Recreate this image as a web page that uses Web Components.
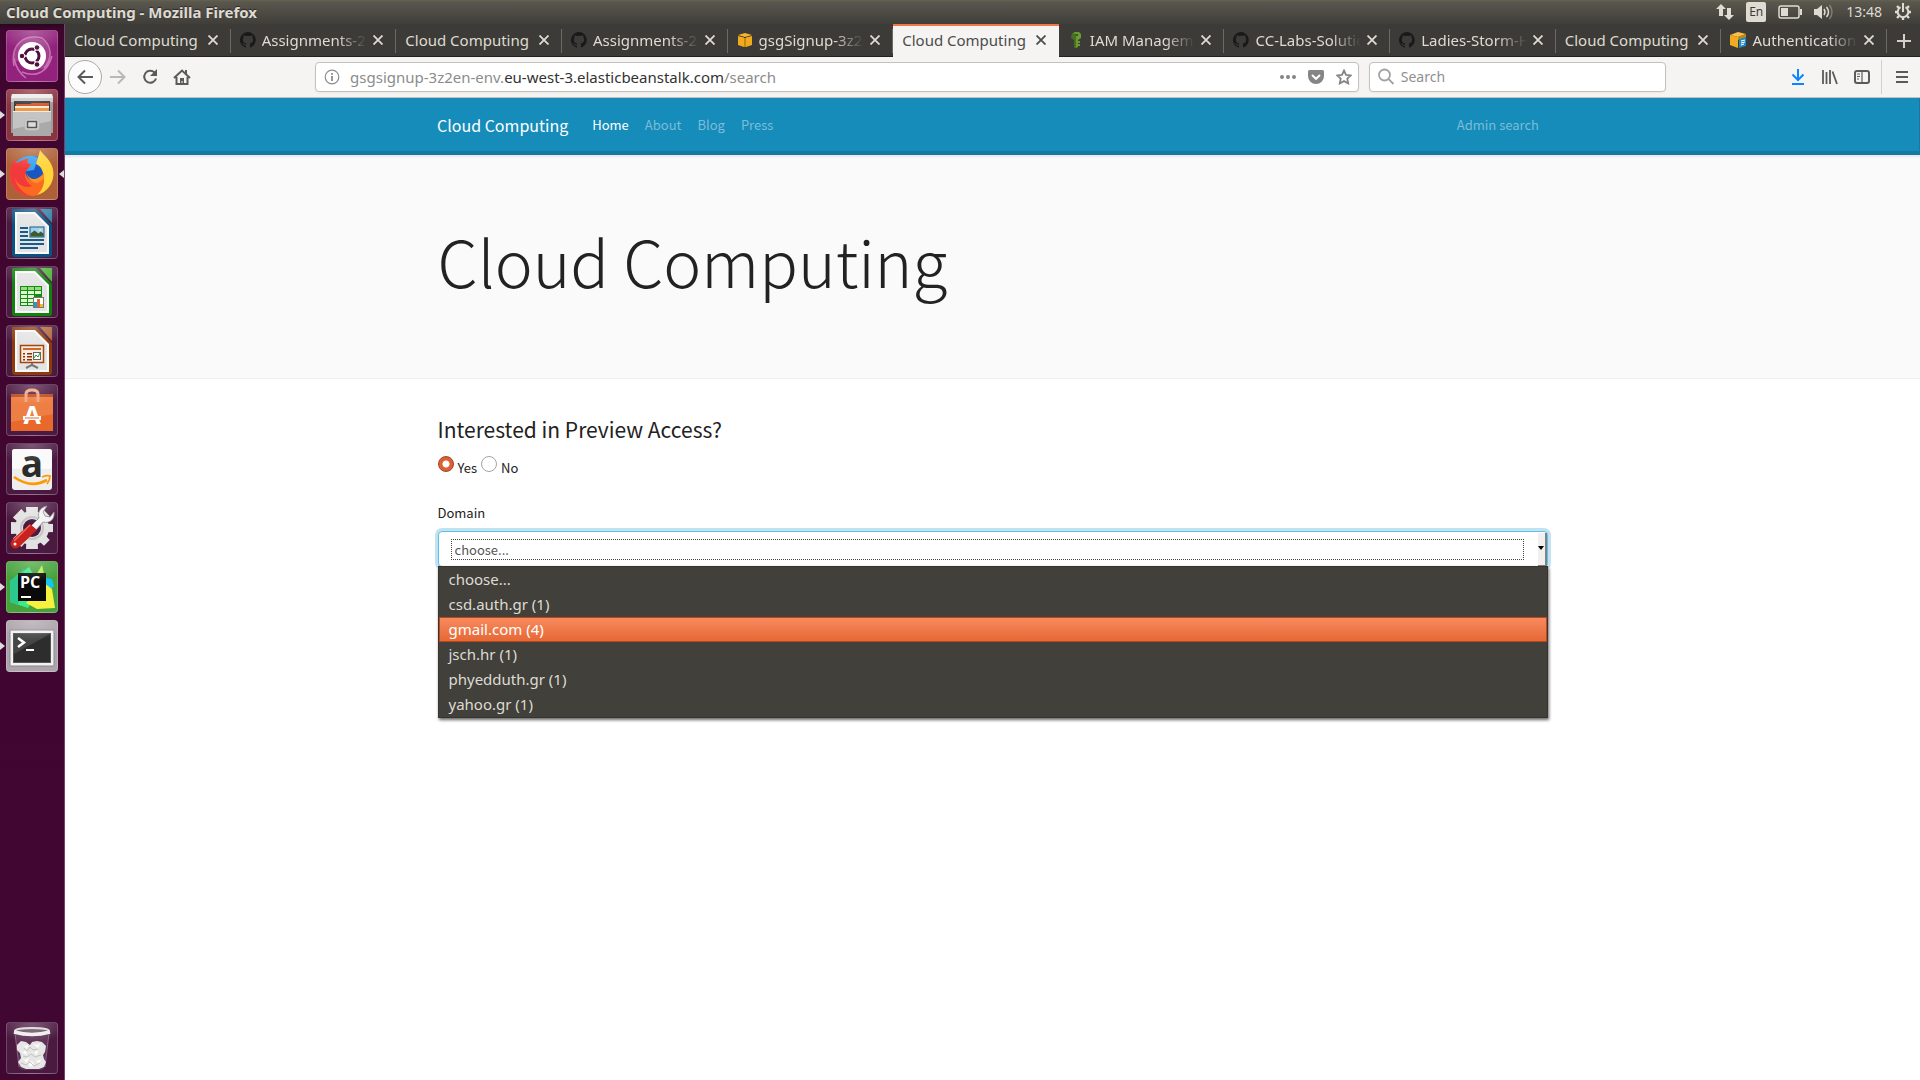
<!DOCTYPE html>
<html lang="en">
<head>
<meta charset="utf-8">
<title>Cloud Computing - Mozilla Firefox</title>
<style>
  html, body { margin: 0; height: 100%; background: #fff; }
  body {
    --ui: "Noto Sans", "Open Sans", sans-serif;
    --site: "Noto Sans CJK SC", "Open Sans", sans-serif;
    font-family: var(--ui);
    font-size: 14px;
    display: flex;
    flex-direction: column;
    min-height: 100vh;
  }
  .desk { flex: 1; display: flex; }
  .window { flex: 1; min-width: 0; display: flex; flex-direction: column; }
</style>
</head>
<body>
<top-panel>Cloud Computing - Mozilla Firefox</top-panel>
<div class="desk">
  <app-launcher></app-launcher>
  <div class="window">
    <tab-strip>
      <browser-tab>Cloud Computing</browser-tab>
      <browser-tab icon="github">Assignments-2018</browser-tab>
      <browser-tab>Cloud Computing</browser-tab>
      <browser-tab icon="github">Assignments-2018</browser-tab>
      <browser-tab icon="cube">gsgSignup-3z2en</browser-tab>
      <browser-tab active>Cloud Computing</browser-tab>
      <browser-tab icon="key">IAM Management</browser-tab>
      <browser-tab icon="github">CC-Labs-Solutions</browser-tab>
      <browser-tab icon="github">Ladies-Storm-Hack</browser-tab>
      <browser-tab>Cloud Computing</browser-tab>
      <browser-tab icon="cubedoc">Authentication a</browser-tab>
    </tab-strip>
    <nav-toolbar></nav-toolbar>
    <site-nav></site-nav>
    <hero-banner>Cloud Computing</hero-banner>
    <preview-form></preview-form>
  </div>
</div>

<script>
const define = (name, html, setup) => {
  const tpl = document.createElement('template');
  tpl.innerHTML = html;
  customElements.define(name, class extends HTMLElement {
    constructor() {
      super();
      this.attachShadow({ mode: 'open' }).append(tpl.content.cloneNode(true));
    }
    connectedCallback() { if (setup) setup(this, this.shadowRoot); }
  });
};

define('top-panel', `
<style>
  :host { display: flex; align-items: center; justify-content: space-between; height: 24px; padding: 0 8px 0 6px;
    box-sizing: border-box; background: linear-gradient(#66614f 0, #5a574e 2px, #3f3e39 100%); color: #dfdbd2; }
  .title { font-weight: 700; font-size: 15px; line-height: 24px; text-shadow: 0 -1px 1px #2a2925; }
  .tray { display: flex; align-items: center; gap: 12px; font-size: 14px; line-height: 24px; }
  .lang { background: #dfdbd2; color: #3c3b37; width: 20px; height: 20px; line-height: 20px; border-radius: 2px; text-align: center; font-size: 12px; }
  svg { display: block; }
</style>
<div class="title"><slot></slot></div>
<div class="tray">
  <svg width="18" height="18" viewBox="0 0 18 18" fill="#dfdbd2"><path d="M5 1l5 5H7v7H3V6H0zM13 17l5-5h-3V5h-4v7H8z"/></svg>
  <span class="lang">En</span>
  <svg width="24" height="14" viewBox="0 0 24 14"><rect x="1" y="1" width="20" height="12" rx="2" fill="none" stroke="#dfdbd2" stroke-width="1.5"/><rect x="3" y="3" width="7" height="8" fill="#dfdbd2"/><rect x="22" y="4" width="2" height="6" fill="#dfdbd2"/></svg>
  <svg width="20" height="16" viewBox="0 0 20 16"><path d="M0 5h3l5-4v14l-5-4H0z" fill="#dfdbd2"/><g fill="none" stroke="#dfdbd2" stroke-width="1.5"><path d="M10 5q2 3 0 6M12.500 3q4 5 0 10"/><path d="M15.500 1q5 7 0 14" opacity=".35"/></g></svg>
  <span>13:48</span>
  <svg width="18" height="18" viewBox="0 0 18 18"><g fill="none" stroke="#dfdbd2"><path d="M6.500 4.200a5.300 5.300 0 1 0 5 0" stroke-width="2"/><path d="M9 0v9" stroke-width="2"/><path d="M3 3l2 2M15 3l-2 2M1 9h3M17 9h-3M3 15l2-2M15 15l-2-2M9 17v-3" stroke-width="2.400"/></g></svg>
</div>`);

define('launcher-item', `
<style>
  :host { display: block; position: relative; width: 52px; height: 52px; margin-left: 6px; border-radius: 4px;
    background: var(--tile, #4b1a41); }
  button { all: unset; display: block; width: 52px; height: 52px; border-radius: 4px; position: relative; }
  button::after { content: ""; position: absolute; inset: 0; border-radius: 4px; pointer-events: none;
    border: 1px solid #ffffff30; background: radial-gradient(ellipse 36px 20px at 50% 0, #ffffff48, #ffffff00); }
  svg { display: block; overflow: visible; }
  i { display: none; position: absolute; top: 22px; border: 4px solid transparent; }
  .run { left: -6px; border-left: 5px solid #ddd; border-right: 0; }
  .focus { right: -6px; border-right: 5px solid #ddd; border-left: 0; }
  :host([running]) .run, :host([focused]) .focus { display: block; }
</style>
<button><svg width="52" height="52" viewBox="0 0 52 52"></svg></button><i class="run"></i><i class="focus"></i>`,
(host, root) => {
  root.querySelector('svg').innerHTML = APPS[host.getAttribute('app')];
  root.querySelector('button').setAttribute('aria-label', host.getAttribute('app'));
});

const page = (dark, light, inner) => `
  <path d="M6 2h24l16 16v29a3 3 0 0 1-3 3H9a3 3 0 0 1-3-3z" fill="${dark}"/>
  <path d="M34 2h12v14z" fill="${light}"/>
  <path d="M9 5h20l14 14v28H9z" fill="#fafafa"/><path d="M11 7h17l13 13v25H11z" fill="#e4e4e4"/>${inner}`;

const APPS = {
  dash: `<g fill="none" stroke="#d78bc6" stroke-width="1.500" opacity=".75"><path d="M8 36C4 14 18 4 36 8M36 8c10 8 11 20 2 30M16 42c14 6 26 0 30-16M8 28c2 10 6 16 12 20"/></g>
    <path d="M8 30C6 12 22 2 40 12c8 12 4 22-2 28z" fill="#c777b4" opacity=".35"/>
    <circle cx="26" cy="26" r="14" fill="#fff"/><circle cx="26" cy="26" r="7" fill="none" stroke="#53103f" stroke-width="3"/>
    <g stroke="#fff" stroke-width="1.500"><path d="M26 26h-9M26 26l5-9M26 26l5 9"/></g><circle cx="26" cy="26" r="5" fill="#fff"/>
    <g fill="#53103f" stroke="#fff" stroke-width="1"><circle cx="16" cy="26" r="2.800"/><circle cx="31" cy="17.500" r="2.800"/><circle cx="31" cy="34.500" r="2.800"/></g>`,
  files: `<path d="M6 5h40l1 4v35H5V9z" fill="#9d9d9d"/><path d="M6 5h40l1 4H5z" fill="#ececec"/><path d="M5 9h42v4H5z" fill="#c9c9c9"/>
    <path d="M8 12h36v11H8z" fill="#3a3a3a"/><path d="M10 15h14l2-1h17v9H10z" fill="#d4562c"/><path d="M9 17h34v6H9z" fill="#f4ead8"/><path d="M9 19h34v4H9z" fill="#ee9a45"/>
    <path d="M7 22h38v25H7z" fill="#aaa"/><path d="M7 22h38v10L7 40z" fill="#c4c4c4"/><path d="M7 22h38v1H7z" fill="#eee"/>
    <rect x="19" y="30" width="14" height="11" rx="2" fill="#d9d9d9" stroke="#bbb"/><rect x="21.500" y="32.500" width="9" height="6" fill="#ddd" stroke="#555" stroke-width="1.500"/>`,
  firefox: `<circle cx="27" cy="27" r="19" fill="#1b6fd8"/><circle cx="26" cy="25" r="13" fill="#1a55c0"/><path d="M10 14q12-10 22-4l-4 12-12 2z" fill="#34a3f4"/>
    <path d="M34 2c2 4 9 8 12 16 5 14-4 29-20 30C12 48 4 38 4 26c0-8 3-12 5-15 0 3 1 4 2 4 4-3 8-3 11-5-1 4-1 6 3 6l-1 3c-4 2-6 4-4 8 3 7 12 9 16 3 4-7-1-14-6-16 1-2 3-6 4-12z" fill="#fb6a20"/>
    <path d="M34 2c2 4 9 8 12 16 5 14-4 26-15 29 8-7 8-16 6-22-1-5-4-8-7-9 1-3 3-9 4-14z" fill="#ffd53a"/>
    <path d="M9 11c0 3 1 4 2 4 4-3 8-3 11-5-1 4-1 6 3 6l-4 6c-4 4-2 12 5 16-8 3-15-2-17-8 1 8 8 16 17 18C12 48 4 38 4 26c0-8 3-12 5-15z" fill="#f23a3c"/>
    <path d="M20 25q7 12 18 0c2 10-12 16-18 0z" fill="#ff9024"/>`,
  writer: page('#0a5280', '#2f81a8', `<g stroke="#175d8c" stroke-width="2"><path d="M14 21h8M14 25h8M14 29h8M14 33h24M14 37h24M14 41h18"/></g><rect x="24" y="20" width="14" height="10" fill="#9bd2f5" stroke="#155a88"/><path d="M24.500 29.500v-3l4-3 4 3 2-2 3 2v3z" fill="#3c5a2e"/><circle cx="34" cy="23" r="1.300" fill="#fd8"/>`),
  calc: page('#12820f', '#49b435', `<rect x="14" y="20" width="22" height="20" fill="#178a14"/><g fill="#fff"><path d="M15 21h6v3h-6zM22 21h6v3h-6zM29 21h6v3h-6z" fill="#92df7c"/><path d="M15 25h6v3h-6zM22 25h6v3h-6zM29 25h6v3h-6zM15 29h6v3h-6zM22 29h6v3h-6zM15 33h6v3h-6zM22 33h6v3h-6zM15 37h6v2h-6zM22 37h6v2h-6z" fill="#dcf7d2"/></g><rect x="27.500" y="31.500" width="10" height="10" fill="#fff" stroke="#777"/><path d="M28 36h3v5h-3z" fill="#2196d8"/><path d="M31 33h3v8h-3z" fill="#e0632c"/><path d="M34 38h3v3h-3z" fill="#f2bb20"/>`),
  impress: page('#8e3a0b', '#b0683a', `<rect x="14.500" y="20.500" width="23" height="17" fill="#f8ece2" stroke="#a4440e" stroke-width="1.500"/><path d="M17 23h18v2H17z" fill="#d3662c"/><g fill="#8e3006"><path d="M17 28h2v1.500h-2zM21 28h5v1.500h-5zM17 31h2v1.500h-2zM21 31h5v1.500h-5zM17 34h2v1.500h-2zM21 34h5v1.500h-5z"/></g><rect x="27.500" y="27.500" width="7" height="7" fill="#fff" stroke="#666"/><path d="M28 33l2-3 2 2 2-4" stroke="#2a9a2a" fill="none"/><path d="M26 38v2l-6 3M26 40l6 3" stroke="#777" stroke-width="2" fill="none"/>`),
  software: `<path d="M5 10h42v8H5z" fill="#bd4a20"/><path d="M5 13h42v34H5z" fill="#e9692c"/><path d="M5 13h42v17L5 38z" fill="#f0894e" opacity=".7"/><path d="M20 18v-8q0-4 6-4t6 4v8" fill="none" stroke="#f6a27a" stroke-width="3"/>
    <text x="26" y="40" text-anchor="middle" font-family="Open Sans, sans-serif" font-weight="700" font-size="25" fill="#fff">A</text><path d="M17 32h18v4H17z" fill="#fff"/><path d="M19 33.500h14v1H19z" fill="#e9692c"/>`,
  amazon: `<rect x="6" y="6" width="40" height="41" rx="3" fill="#eee"/><rect x="6" y="6" width="40" height="20" rx="3" fill="#fafafa"/><text x="26" y="34" text-anchor="middle" font-family="Open Sans, sans-serif" font-weight="700" font-size="37" fill="#2b2b2b">a</text>
    <path d="M8 34q17 12 33 3" fill="none" stroke="#f90" stroke-width="2.600"/><path d="M36 34q5-2 8-1 0 4-3 8" fill="none" stroke="#f90" stroke-width="1.800"/>`,
  settings: `<g fill="#e2e2e2"><circle cx="26" cy="26" r="17"/><path d="M22 5h8l2 42H20z"/><path d="M22 5h8l2 42H20z" transform="rotate(45 26 26)"/><path d="M22 5h8l2 42H20z" transform="rotate(90 26 26)"/><path d="M22 5h8l2 42H20z" transform="rotate(135 26 26)"/><path d="M22 5h8l2 42H20z" transform="rotate(180 26 26)"/></g><circle cx="26" cy="26" r="9" fill="#4b1a41"/><circle cx="26" cy="26" r="11" fill="none" stroke="#c4c4c4" stroke-width="2"/>
    <path d="M25 24l8-8c-2-6 2-11 8-12l-4 6 2 4 5 1 4-5c1 7-4 12-11 10l-7 8z" fill="#f4f4f4" stroke="#888" stroke-width=".8"/><path d="M24 22l7 6-18 17q-4 3-7 0t0-7z" fill="#c9211e"/><path d="M24 23L8 39" stroke="#f06a5c" stroke-width="1.500"/><circle cx="9" cy="42" r="1.500" fill="#fff"/>`,
  pycharm: `<path d="M4 20l19-14 12 20-13 21-18-6z" fill="#3bea8a"/><path d="M4 20l14-12-6 36-8-3z" fill="#2dc98c"/><path d="M36 4l4 18-18 6z" fill="#b7ef4b"/><path d="M34 16l12 2 2 7-10 10z" fill="#14c4f2"/><path d="M38 22l8 6 3 19-18 1-11-6z" fill="#f6f03e"/>
    <rect x="12" y="12" width="28" height="28" fill="#0a0a0a"/><text x="14" y="27" font-family="Open Sans, sans-serif" font-weight="700" font-size="16" fill="#fff">PC</text><path d="M15 35h10v2H15z" fill="#fff"/>`,
  terminal: `<rect x="4" y="10" width="44" height="36" rx="1" fill="#f2f2f2" stroke="#888"/><rect x="7.500" y="13.500" width="37" height="29" fill="#2d2d2d" stroke="#555"/><path d="M8 14h36L8 34z" fill="#505050" opacity=".7"/><path d="M12 18l6 4.500-6 4.500" fill="none" stroke="#fff" stroke-width="2.500"/><path d="M20 30h8" stroke="#fff" stroke-width="2"/>`,
  trash: `<path d="M9 11h34l-4 34q-1 3-5 3H18q-4 0-5-3z" fill="#8d6b87" opacity=".3"/><path d="M9 11l4 34M43 11l-4 34" stroke="#a58aa0" opacity=".6"/>
    <path d="M11 23l4-4 5 1 4 3 2-3 5-1 5 1 4 4-1 6-2 3 1 4 2 3-2 5-5 2H20l-5-2-3-5 3-4-1-5-3-3z" fill="#e6e6e4"/>
    <path d="M16 22l3 2 3-1-1 4zM27 22l4 1 3-2-2 5zM14 29l4 1 2-2 1 5zM25 28l3 3 4-3-1 5zM16 36l3 2 4-3-2 6zM28 36l3 3 4-2-2 5zM22 41l4-2 2 4-4 2z" fill="#fff"/>
    <path d="M18 26l3 3 3-4 3 3 5-1M17 34l4 1 4-3 4 3 6-2M15 41l5 2 4-3 4 4 6-3" stroke="#c3c3c1" fill="none"/>
    <ellipse cx="26" cy="9" rx="17" ry="3" fill="#6b4a64" stroke="#d8d8d6" stroke-width="2"/><path d="M8 10q18 5 36 0" stroke="#eee" stroke-width="3.500" fill="none"/>`
};

define('app-launcher', `
<style>
  :host { display: flex; flex-direction: column; gap: 7px; box-sizing: border-box; width: 65px; padding: 6px 0; background: linear-gradient(#2b0621 0, #40062f 6px, #410733 100%); border-right: 1px solid #7b3f70; }
  .end { margin-top: auto; }
</style>
<launcher-item app="dash" style="--tile:#92227b"></launcher-item>
<launcher-item app="files" running style="--tile:#8a3441"></launcher-item>
<launcher-item app="firefox" running focused style="--tile:#ae6138"></launcher-item>
<launcher-item app="writer"></launcher-item>
<launcher-item app="calc"></launcher-item>
<launcher-item app="impress"></launcher-item>
<launcher-item app="software"></launcher-item>
<launcher-item app="amazon"></launcher-item>
<launcher-item app="settings"></launcher-item>
<launcher-item app="pycharm" running style="--tile:#46a23c"></launcher-item>
<launcher-item app="terminal" running style="--tile:#aca4aa"></launcher-item>
<launcher-item app="trash" class="end"></launcher-item>`);

define('tab-strip', `
<style>
  :host { display: flex; height: 33px; box-sizing: border-box; background: #3c3b37; box-shadow: inset 0 -1px #23221f; }
  button { all: unset; width: 33px; display: grid; place-items: center; }
</style>
<slot></slot>
<button aria-label="New tab"><svg width="14" height="14" viewBox="0 0 14 14"><path d="M7 0v14M0 7h14" stroke="#d5d1c8" stroke-width="2"/></svg></button>`);

const FAVICONS = {
  github: `<path fill="#191919" fill-rule="evenodd" d="M8 0a8 8 0 0 0-2.500 15.600c.4 0 .5-.2.500-.4v-1.500c-2.200.5-2.700-1-2.700-1-.4-.9-.9-1.200-.9-1.200-.7-.5.1-.5.1-.5.800.1 1.200.8 1.200.8.7 1.300 1.900.9 2.300.7.1-.5.300-.9.500-1.100-1.800-.2-3.600-.9-3.600-4 0-.9.300-1.600.8-2.100-.1-.2-.4-1 .1-2.100 0 0 .7-.2 2.200.8a7.600 7.600 0 0 1 4 0c1.500-1 2.200-.8 2.200-.8.400 1.100.2 1.900.1 2.100.5.500.8 1.200.8 2.100 0 3.100-1.900 3.800-3.600 4 .3.300.5.700.5 1.500v2.200c0 .2.100.5.500.4A8 8 0 0 0 8 0z"/>`,
  cube: `<path d="M1 3l7-2 7 2-7 2z" fill="#f9b32f"/><path d="M1 4l6 1.500V15l-6-2zM15 4L9 5.500V15l6-2z" fill="#f0ac1e"/><path d="M7 6h2v9H7z" fill="#c98707"/>`,
  cubedoc: `<path d="M0 3l8-3 8 2-8 3z" fill="#f9c04e"/><path d="M0 3l8 2v11l-8-3z" fill="#f0ac1e"/><path d="M8 5l8-3v4L8 8z" fill="#c98707"/><path d="M9 7l7-2v9l-7 2z" fill="#1f87c4"/><path d="M11 9l4-1M11 11l4-1M11 13l3-1" stroke="#fff" stroke-width="1.200"/>`,
  key: `<path d="M7 0h4l2 2v4l-3 2v7l-2 1-2-1V8L4 5l1-4z" fill="#6b9a35"/><path d="M4 1l4 1v14l-2-1V8L3 6z" fill="#46701f"/><circle cx="9" cy="3" r="1" fill="#25401a"/><path d="M10 9h2v2h-2zM10 12h2v2h-2z" fill="#6b9a35"/>`
};

define('browser-tab', `
<style>
  :host { flex: 1; min-width: 0; display: flex; align-items: center; gap: 6px; box-sizing: border-box; height: 32px; padding: 0 13px 0 9px; color: #dfdbd2;
    background: linear-gradient(#6c6a64, #6c6a64) right 5px / 1px 24px no-repeat; }
  :host([active]) { height: 33px; padding-bottom: 1px; background: #f5f4f2; color: #4c4c4c; box-shadow: inset 0 2px #f07746; }
  .icon { display: none; flex: none; }
  :host([icon]) .icon { display: block; }
  .label { flex: 1; min-width: 0; overflow: hidden; white-space: nowrap; font-size: 15px; line-height: 24px;  }
  :host([icon]) .label { -webkit-mask-image: linear-gradient(to left, transparent, #000 30px); mask-image: linear-gradient(to left, transparent, #000 30px); }
  button { all: unset; flex: none; display: block; width: 10px; height: 10px; }
  svg { display: block; }
</style>
<svg class="icon" width="16" height="16" viewBox="0 0 16 16"></svg>
<span class="label"><slot></slot></span>
<button aria-label="Close tab"><svg width="10" height="10" viewBox="0 0 10 10"><path d="M0.500.5l9 9M9.500.5l-9 9" stroke="currentColor" stroke-width="1.800"/></svg></button>`,
(host, root) => {
  const icon = host.getAttribute('icon');
  if (icon) root.querySelector('.icon').innerHTML = FAVICONS[icon];
});

define('nav-toolbar', `
<style>
  :host { display: flex; align-items: center; height: 41px; box-sizing: border-box; background: #f5f4f2; border-bottom: 1px solid #c4c2bf; color: #5a5a5a; }
  button { all: unset; display: grid; place-items: center; width: 32px; height: 32px; }
  svg { display: block; fill: none; stroke: currentColor; stroke-width: 2; }
  .left, .right { display: flex; align-items: center; flex: none; }
  .left { width: 134px; padding-left: 3px; box-sizing: border-box; }
  .right { width: 138px; }
  .back { box-sizing: border-box; width: 34px; height: 34px; border: 1px solid #aaa; border-radius: 50%; background: #fcfcfc; }
  .fwd { color: #b9b8b6; }
  .space { flex: 116; }
  .box { display: flex; align-items: center; height: 30px; box-sizing: border-box; border: 1px solid #c4c0bb; border-radius: 4px; background: #fff; box-shadow: 0 1px 2px #0000000d; font-size: 15px; min-width: 0; }
  .url { flex: 1027; padding: 0 6px 0 8px; color: #8c8c8c; }
  .url .addr { flex: 1; margin-left: 10px; white-space: nowrap; line-height: 28px; overflow: hidden; font-size: 15px; }
  .addr b { font-weight: 400; color: #333; }
  .tools { display: flex; gap: 12px; align-items: center; color: #858585; }
  .search { flex: 281; margin-left: 10px; padding: 0 7px; gap: 6px; color: #a2a2a2; }
  input { all: unset; flex: 1; min-width: 0; font-size: 14px; line-height: 28px; }
  input::placeholder { color: #8f8f8f; opacity: 1; }
  .dl { color: #0a84ff; }
  .sep { border-left: 1px solid #d3d1ce; height: 34px; margin: 0 4px 0 3px; }
</style>
<div class="left">
  <button class="back" aria-label="Back"><svg width="16" height="16" viewBox="0 0 16 16"><path d="M16 8H1.500M8 1.500L1.500 8 8 14.500"/></svg></button>
  <button class="fwd" aria-label="Forward"><svg width="16" height="16" viewBox="0 0 16 16"><path d="M0 8h14.500M8 1.500L14.500 8 8 14.500"/></svg></button>
  <button aria-label="Reload"><svg width="16" height="16" viewBox="0 0 16 16"><path d="M14 9.500A6 6 0 1 1 12.500 3.500"/><path d="M15 0v7H8z" fill="currentColor" stroke="none"/></svg></button>
  <button aria-label="Home"><svg width="18" height="16" viewBox="0 0 18 16"><path d="M1 9l8-7.500L17 9M3.500 8v7h11V8"/><path d="M13 1v4" /><path d="M7 15V9h4v6h-1.500v-3h-1v3z" fill="currentColor" stroke="none"/></svg></button>
</div>
<div class="space"></div>
<div class="box url">
  <svg width="16" height="16" viewBox="0 0 16 16" style="stroke-width:1.200"><circle cx="8" cy="8" r="6.800"/><path d="M8 7v5M8 4v1.800" style="stroke-width:1.800"/></svg>
  <span class="addr">gsgsignup-3z2en-env.<b>eu-west-3.elasticbeanstalk.com</b>/search</span>
  <span class="tools">
    <svg width="16" height="16" viewBox="0 0 16 16" style="fill:currentColor;stroke:none"><circle cx="2" cy="8" r="2"/><circle cx="8" cy="8" r="2"/><circle cx="14" cy="8" r="2"/></svg>
    <svg width="16" height="16" viewBox="0 0 16 16"><path d="M1.500 1h13Q16 1 16 2.500V7A8 8 0 0 1 0 7V2.500Q0 1 1.500 1z" fill="currentColor" stroke="none"/><path d="M4 6l4 3.800L12 6" stroke="#fff"/></svg>
    <svg width="16" height="16" viewBox="0 0 16 16" style="stroke-width:1.800"><path d="M8 1.500l2 4.300 4.800.6-3.500 3.200.9 4.800L8 12.100l-4.200 2.300.9-4.800L1.200 6.400 6 5.800z"/></svg>
  </span>
</div>
<label class="box search">
  <svg width="18" height="18" viewBox="0 0 18 18" style="stroke-width:1.800"><circle cx="7.500" cy="7" r="5.500"/><path d="M11.500 11l5 5"/></svg>
  <input type="text" placeholder="Search" aria-label="Search">
</label>
<div class="space"></div>
<div class="right">
  <button class="dl" aria-label="Downloads"><svg width="14" height="16" viewBox="0 0 14 16"><path d="M7 0v10.500M1.500 5.500L7 11l5.500-5.500M1 15h12"/></svg></button>
  <button aria-label="Library"><svg width="16" height="16" viewBox="0 0 16 16" style="stroke-width:1.800"><path d="M1 1v14M4.500 3v12M8 1v14M10.500 2.500L15 15"/></svg></button>
  <button aria-label="Sidebars"><svg width="16" height="14" viewBox="0 0 16 14"><rect x="1" y="1" width="14" height="12" rx="2"/><path d="M8 1v12" stroke-width="1.200"/><path d="M3 4h3M3 6.500h3M3 9h2" stroke-width="1"/></svg></button>
  <span class="sep"></span>
  <button aria-label="Menu"><svg width="12" height="12" viewBox="0 0 12 12"><path d="M0 1h12M0 6h12M0 11h12"/></svg></button>
</div>`);

define('site-nav', `
<style>
  :host { display: block; background: #158cba; border: solid #127ba3; border-width: 0 1px 4px 0; }
  nav { max-width: 1110px; margin: 0 auto; height: 53px; display: flex; align-items: center; gap: 16px; font-family: var(--site); font-size: 13px; }
  a { color: #ffffff70; text-decoration: none; line-height: 24px; }
  .brand { color: #fff; font-size: 16px; margin-right: 8px; }
  .on { color: #fff; }
  .end { margin-left: auto; padding-right: 8px; }
</style>
<nav>
  <a class="brand" href="#">Cloud Computing</a>
  <a class="on" href="#">Home</a><a href="#">About</a><a href="#">Blog</a><a href="#">Press</a>
  <a class="end" href="#">Admin search</a>
</nav>`);

define('hero-banner', `
<style>
  :host { display: block; background: #fafafa; border-bottom: 1px solid #f0f0f0; box-shadow: inset 0 3px 2px -1px #e8e8ee; padding: 58px 0 70px; }
  h1 { max-width: 1110px; margin: 0 auto; font: 300 64px/95px var(--site); color: #222; }
</style>
<h1><slot></slot></h1>`);

define('preview-form', `
<style>
  :host { display: block; max-width: 1110px; width: 100%; margin: 0 auto; padding-top: 35px; font-family: var(--site); font-size: 13px; color: #222; }
  h2 { margin: 0; font-weight: 400; font-size: 21px; line-height: 30px; }
  .radios { display: flex; align-items: center; gap: 4px; margin-top: 10px; height: 24px; line-height: 24px; }
  input { appearance: none; margin: 0; width: 16px; height: 16px; box-sizing: border-box; border: 1px solid #a5a5a5; border-radius: 50%; background: #fff; align-self: flex-start; margin-top: 2px; }
  input:checked { border-color: #a3431f; background: radial-gradient(circle, #fff 0 3px, #dd6036 4px); }
  .radios label { padding-top: 3px; }
  .name { display: block; margin-top: 23px; line-height: 24px; }
  .field { position: relative; margin-top: 6px; }
  .control { position: relative; display: flex; height: 36px; box-sizing: border-box; border: 1px solid #5bc0eb; border-radius: 4px; box-shadow: 0 0 0 3px #c1e2ee; padding: 7px 2px 7px 12px; background: #fff; }
  select { appearance: none; flex: 1; margin: 0 21px 0 0; padding: 0 4px; border: 0; outline: 1px dotted #444; outline-offset: -1px; background: #fff; color: #555; font: 13px/20px var(--site); height: 21px; }
  .arrow { position: absolute; top: 1px; right: 0; bottom: 0; width: 7px; border: solid #828282; border-width: 0 2px 1px 0; background: #f1f0ef; }
  .arrow::after { content: ""; position: absolute; left: 0; top: 13px; border: 3px solid transparent; border-top: 4px solid #000; border-bottom: 0; }
  ul { position: absolute; z-index: 1; top: 35px; left: 0; right: 0; margin: 0; padding: 0; list-style: none; border: 1px solid #35342f; background: #41403b; color: #dfdbd2; box-shadow: 1px 2px 3px #0009; font: 15px/25px var(--ui); }
  li { height: 25px; box-sizing: border-box; padding: 0 10px; }
  li[aria-selected=true] { background: linear-gradient(#f98b5f, #e56734); color: #fff; box-shadow: inset 0 0 0 1px #b9491d; }
</style>
<h2>Interested in Preview Access?</h2>
<div class="radios">
  <input type="radio" name="access" id="yes" checked><label for="yes">Yes</label>
  <input type="radio" name="access" id="no"><label for="no">No</label>
</div>
<label class="name" for="domain">Domain</label>
<div class="field">
  <div class="control"><select id="domain"><option>choose...</option></select><span class="arrow"></span></div>
  <ul role="listbox" aria-label="Domain">
    <li role="option">choose...</li>
    <li role="option">csd.auth.gr (1)</li>
    <li role="option" aria-selected="true">gmail.com (4)</li>
    <li role="option">jsch.hr (1)</li>
    <li role="option">phyedduth.gr (1)</li>
    <li role="option">yahoo.gr (1)</li>
  </ul>
</div>`);
</script>
</body>
</html>
